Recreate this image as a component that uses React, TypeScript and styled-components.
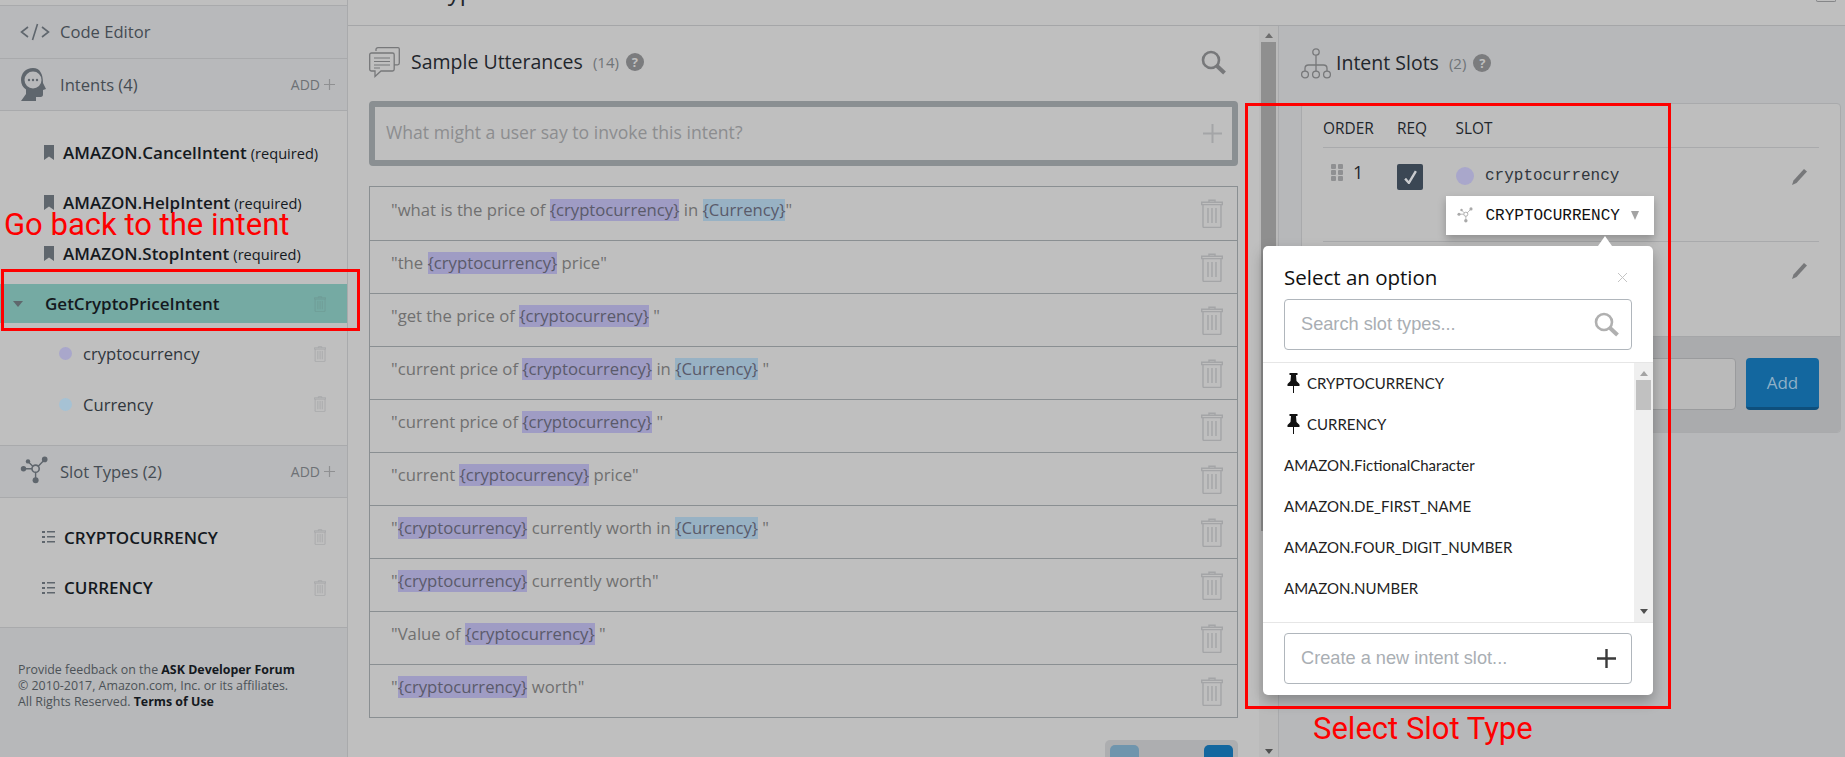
import { createGlobalStyle, styled } from "styled-components";

const GlobalStyle = createGlobalStyle`
  html, body {
    margin: 0;
    padding: 0;
    height: 100%;
    overflow: hidden;
    background: #bfbfbf;
  }
  * { box-sizing: border-box; }
`;

const SANS = `"Open Sans", "Liberation Sans", sans-serif`;
const MONO = `"Liberation Mono", monospace`;

const Page = styled.div`
  position: relative;
  width: 1845px;
  height: 757px;
  overflow: hidden;
  display: grid;
  grid-template-columns: 348px 1fr;
  font-family: ${SANS};
  color: #1f262c;
`;

/* ---------- sidebar ---------- */
const Sidebar = styled.aside`
  display: flex;
  flex-direction: column;
  height: 757px;
  background: #bfbfbf;
  border-right: 1px solid #a9aaac;
  padding-top: 5px;
`;

const SideHead = styled.div`
  height: 53px;
  flex: none;
  display: flex;
  align-items: center;
  padding: 0 12px 1px 20px;
  background: #b8b9bb;
  border-top: 1px solid #a9aaac;
  border-bottom: ${(p) => (p.$last ? "1px solid #a9aaac" : "none")};
  font-size: 16.6px;
  color: #454c53;
`;

const SideIcon = styled.span`
  width: 40px;
  flex: none;
  display: flex;
  align-items: center;
`;

const AddLink = styled.span`
  margin-left: auto;
  display: flex;
  align-items: center;
  gap: 4px;
  font-size: 14px;
  color: #6d7175;
`;

const SideList = styled.div`
  flex: none;
  height: ${(p) => p.$height}px;
  padding-top: ${(p) => p.$top}px;
`;

const SideItem = styled.div`
  height: ${(p) => p.$height || 50.5}px;
  margin-top: ${(p) => p.$top || 0}px;
  display: flex;
  align-items: center;
  padding-left: ${(p) => p.$indent}px;
  padding-right: 21px;
  gap: ${(p) => p.$gap || 9}px;
  font-size: ${(p) => (p.$bold ? 17 : 16.6)}px;
  font-weight: ${(p) => (p.$bold ? 600 : 400)};
  color: ${(p) => (p.$bold ? "#14191e" : "#30363c")};
  background: ${(p) => (p.$active ? "#75aaa3" : "transparent")};
  & > svg:last-child { margin-left: auto; }
`;

const Required = styled.span`
  font-size: 14.6px;
  font-weight: 500;
  margin-left: 4px;
`;

const Caret = styled.span`
  width: 0;
  height: 0;
  border-left: ${(p) => p.$half || 5}px solid transparent;
  border-right: ${(p) => p.$half || 5}px solid transparent;
  border-top: ${(p) => p.$tall || 6}px solid ${(p) => p.$color || "#5f686d"};
`;

const Dot = styled.span`
  width: ${(p) => p.$size}px;
  height: ${(p) => p.$size}px;
  flex: none;
  border-radius: 50%;
  background: ${(p) => p.$color};
`;

const SideFooter = styled.footer`
  flex: 1;
  background: #b7b8ba;
  border-top: 1px solid #a9aaac;
  padding: 34px 18px 0;
  font-size: 12.4px;
  line-height: 16px;
  color: #4c5257;
  white-space: nowrap;
  b { font-weight: 700; color: #14191e; }
`;

/* ---------- main ---------- */
const Main = styled.main`
  display: flex;
  flex-direction: column;
  height: 757px;
  min-width: 0;
`;

const TitleBar = styled.header`
  height: 26px;
  flex: none;
  overflow: hidden;
  display: flex;
  justify-content: space-between;
  padding: 0 9px 0 29px;
  border-bottom: 1px solid #a5a6a8;
`;

const Title = styled.h1`
  margin: -26px 0 0;
  font-size: 24px;
  line-height: 33px;
  font-weight: 400;
  color: #1f262c;
`;

const TitleButton = styled.span`
  width: 20px;
  height: 2px;
  border: 1px solid #858688;
  border-top: none;
  border-radius: 0 0 2px 2px;
`;

const Columns = styled.div`
  flex: 1;
  min-height: 0;
  display: flex;
`;

const UtterancePanel = styled.section`
  width: 911px;
  flex: none;
  padding: 0 21px 0 21px;
  background: #bfbfbf;
`;

const PanelHead = styled.div`
  height: ${(p) => p.$height}px;
  display: flex;
  align-items: center;
  padding-bottom: ${(p) => p.$pad}px;
`;

const PanelTitle = styled.h2`
  margin: 0 0 0 ${(p) => p.$gap}px;
  padding-bottom: 2px;
  font-size: 19.5px;
  font-weight: 400;
  color: #1f262c;
`;

const Count = styled.span`
  margin-left: 10px;
  font-size: 15px;
  color: #6f7478;
`;

const Help = styled.span`
  width: 18px;
  height: 18px;
  margin-left: 7px;
  border-radius: 50%;
  background: #7b7c7e;
  color: #bfbfbf;
  font-size: 13px;
  font-weight: 700;
  display: flex;
  align-items: center;
  justify-content: center;
`;

const HeadAction = styled.span`
  margin-left: auto;
  margin-right: 12px;
  display: flex;
`;

const UtteranceInput = styled.div`
  height: 65px;
  border: 6px solid #8a8f92;
  border-radius: 4px;
  display: flex;
  align-items: center;
  justify-content: space-between;
  padding: 0 10px 4px 11px;
  font-size: 17.6px;
  color: #8c8d8f;
  svg { margin-top: 4px; }
`;

const UtteranceList = styled.ul`
  list-style: none;
  margin: 20px 0 0;
  padding: 0;
  border: 1px solid #8a8f92;
`;

const Utterance = styled.li`
  height: 53px;
  display: flex;
  align-items: center;
  justify-content: space-between;
  padding: 0 14px 0 21px;
  font-size: 16.7px;
  color: #707070;
  white-space: pre;
  & + & { border-top: 1px solid #8a8f92; }
  & > span { margin-bottom: 9px; }
`;

const Mark = styled.span`
  display: inline-block;
  line-height: 22px;
  height: 22px;
  background: ${(p) => (p.$kind === "Currency" ? "#98b2c4" : "#9f9cc4")};
  color: #5a5a6a;
`;

const Pager = styled.div`
  margin: 22px 0 0 auto;
  width: 133px;
  height: 60px;
  padding: 5px;
  display: flex;
  justify-content: space-between;
  background: #adaeb0;
  border-radius: 5px;
`;

const PagerButton = styled.span`
  width: 29px;
  height: 40px;
  border-radius: 5px;
  background: ${(p) => (p.$disabled ? "#6f95ad" : "#13679f")};
`;

/* ---------- scrollbars ---------- */
const ScrollTrack = styled.div`
  width: ${(p) => p.$width}px;
  flex: none;
  display: flex;
  flex-direction: column;
  align-items: center;
  background: ${(p) => p.$bg};
  padding: ${(p) => p.$top}px 0 ${(p) => p.$bottom}px;
`;

const ArrowUp = styled.span`
  width: 0;
  height: 0;
  border-left: 4px solid transparent;
  border-right: 4px solid transparent;
  border-bottom: 5px solid ${(p) => p.$color};
`;

const ArrowDown = styled(ArrowUp)`
  border-bottom: none;
  border-top: 5px solid #505050;
  margin-top: auto;
`;

const Thumb = styled.span`
  width: ${(p) => p.$width}px;
  height: ${(p) => p.$height}px;
  margin-top: 4px;
  background: ${(p) => p.$color};
`;

/* ---------- slots panel ---------- */
const SlotPanel = styled.section`
  flex: 1;
  padding: 0 4px 0 22px;
  background: #b7b8ba;
  border-left: 1px solid #a9aaac;
`;

const SlotCard = styled.div`
  background: #bebebe;
  border: 1px solid #a9aaac;
  border-radius: 4px;
  overflow: hidden;
`;

const SlotHeadRow = styled.div`
  height: 44px;
  margin: 0 21px;
  padding-top: 6px;
  display: grid;
  grid-template-columns: 74px 58.5px 1fr;
  align-items: center;
  font-size: 15.4px;
  color: #1f262c;
  border-bottom: 1px solid #a9aaac;
`;

const SlotRow = styled.div`
  height: 94px;
  margin: 0 21px;
  padding-top: 16px;
  display: grid;
  grid-template-columns: 74px 58.5px 1fr 30px;
  align-items: start;
  border-bottom: ${(p) => (p.$last ? "none" : "1px solid #a9aaac")};
`;

const OrderCell = styled.div`
  display: flex;
  align-items: center;
  gap: 10px;
  padding-left: 8px;
  font-size: 18px;
  line-height: 17px;
`;

const Grip = styled.span`
  display: grid;
  grid-template-columns: repeat(2, 5px);
  grid-auto-rows: 5px;
  gap: 1px 2px;
  i { background: #8f9092; border-radius: 1px; }
`;

const Check = styled.span`
  width: 26px;
  height: 26px;
  border-radius: 2px;
  background: #3b4754;
  display: flex;
  align-items: center;
  justify-content: center;
`;

const SlotCell = styled.div`
  display: flex;
  flex-direction: column;
  align-items: flex-start;
`;

const SlotName = styled.div`
  display: flex;
  align-items: center;
  gap: 11.5px;
  height: 22px;
  margin-top: 1px;
  font-family: ${MONO};
  font-size: 16px;
  color: #30363c;
`;

const TypeChip = styled.div`
  margin: 9px 0 0 -9.5px;
  width: 208px;
  height: 39px;
  display: flex;
  align-items: center;
  padding-left: 11px;
  background: #fff;
  font-family: ${MONO};
  font-size: 16px;
  color: #111;
  box-shadow: 0 4px 8px rgba(0, 0, 0, 0.25);
  span:last-child { margin-left: 11px; }
`;

const ChipIcon = styled.span`
  width: 28.5px;
  display: flex;
`;

const EditIcon = styled.span`
  padding: 5px 0 0 3px;
  display: flex;
`;

const AddRow = styled.div`
  height: 96px;
  background: #aaabad;
  border-top: 1px solid #a5a6a8;
  padding: 21px 21px 0;
  display: flex;
  gap: 10px;
`;

const AddInput = styled.div`
  flex: 1;
  height: 52px;
  background: #bababa;
  border: 1px solid #9a9b9d;
  border-radius: 4px;
`;

const AddButton = styled.span`
  width: 73px;
  height: 52px;
  background: #13679f;
  border-bottom: 3px solid #0e4f7c;
  border-radius: 4px;
  color: #8fb0c7;
  font-size: 17px;
  display: flex;
  align-items: center;
  justify-content: center;
`;

/* ---------- popover ---------- */
const Popover = styled.div`
  position: absolute;
  left: 1263px;
  top: 246px;
  width: 390px;
  height: 449px;
  background: #fff;
  border-radius: 5px;
  box-shadow: 0 6px 14px rgba(0, 0, 0, 0.28);
  display: flex;
  flex-direction: column;
  &::before {
    content: "";
    position: absolute;
    left: 335px;
    top: -10px;
    border-left: 7px solid transparent;
    border-right: 7px solid transparent;
    border-bottom: 10px solid #fff;
  }
`;

const PopoverHead = styled.div`
  height: 53px;
  flex: none;
  display: flex;
  align-items: center;
  justify-content: space-between;
  padding: 9px 26px 0 21px;
  font-size: 20.5px;
  color: #111;
`;

const PopoverField = styled.div`
  height: 51px;
  margin: 0 21px;
  flex: none;
  border: 1px solid #b0b6bc;
  border-radius: 4px;
  display: flex;
  align-items: center;
  justify-content: space-between;
  padding: 0 ${(p) => p.$right}px 0 16px;
  font-family: "Liberation Sans", sans-serif;
  font-size: 18.2px;
  color: #a9aeb3;
`;

const OptionsArea = styled.div`
  margin-top: 12px;
  height: 261px;
  flex: none;
  display: flex;
  border-top: 1px solid #e6e6e6;
  border-bottom: 1px solid #e6e6e6;
`;

const Options = styled.ul`
  list-style: none;
  flex: 1;
  margin: 0;
  padding: 0 0 0 21px;
`;

const Option = styled.li`
  height: 41px;
  display: flex;
  align-items: center;
  gap: 7px;
  padding: 0 0 2px ${(p) => (p.$pinned ? 3 : 0)}px;
  font-family: Lato, sans-serif;
  font-size: 15px;
  color: #222;
`;

const CreateField = styled(PopoverField)`
  margin-top: 10px;
`;

/* ---------- red annotations ---------- */
const RedBox = styled.div`
  position: absolute;
  left: ${(p) => p.$x}px;
  top: ${(p) => p.$y}px;
  width: ${(p) => p.$w}px;
  height: ${(p) => p.$h}px;
  border: 3px solid #fe0000;
`;

const RedLabel = styled.div`
  position: absolute;
  left: ${(p) => p.$x}px;
  top: ${(p) => p.$y}px;
  font-family: Roboto, sans-serif;
  font-size: 31px;
  line-height: 32px;
  color: #fe0000;
  white-space: nowrap;
`;

/* ---------- drawings ---------- */
const Trash = ({ h = 29, color = "#a4a5a7" }: { h?: number; color?: string }) => (
  <svg width={(h * 22) / 29} height={h} viewBox="0 0 22 29" fill="none" stroke={color} strokeWidth="1.4">
    <path d="M8 3V1.2h6V3M0.7 3.2h20.6v2.4H0.7zM2 5.6v21.6c0 .8.6 1.3 1.3 1.3h15.4c.7 0 1.3-.5 1.3-1.3V5.6M7 9v15M11 9v15M15 9v15" />
  </svg>
);

const Bookmark = () => (
  <svg width="10" height="15" viewBox="0 0 10 15" fill="#5f666d">
    <path d="M0 0h10v15L5 11.5 0 15z" />
  </svg>
);

const ListIcon = () => (
  <svg width="13" height="12" viewBox="0 0 13 12" fill="#5f666d">
    <path d="M0 0h3v2H0zM5 0h8v1.5H5zM0 5h3v2H0zM5 5h8v1.5H5zM0 10h3v2H0zM5 10h8v1.5H5z" />
  </svg>
);

const CodeIcon = () => (
  <svg width="30" height="18" viewBox="0 0 30 18" fill="none" stroke="#5f666d" strokeWidth="1.6">
    <path d="M8 4 1.5 9 8 14M22 4l6.5 5L22 14M17.5 1l-5 16" />
  </svg>
);

const HeadIcon = () => (
  <svg width="27" height="33" viewBox="0 0 27 33">
    <path
      fill="#5f666d"
      d="M13 0C5.5 0 1 5.5 1 12c0 4.500 2 7.500 5 9.500V26l-5 7h15v-4h4.500c1.800 0 2.500-1 2.500-2.500V22l3-1-3-6C23 6 20 0 13 0z"
    />
    <circle cx="13" cy="12" r="8.500" fill="#b8b9bb" />
    <circle cx="9" cy="12" r="1.200" fill="#5f666d" />
    <circle cx="13" cy="12" r="1.200" fill="#5f666d" />
    <circle cx="17" cy="12" r="1.200" fill="#5f666d" />
  </svg>
);

const NetworkIcon = ({ size = 30, color = "#5f666d" }: { size?: number; color?: string }) => (
  <svg width={size} height={size} viewBox="0 0 30 30" fill={color} stroke={color}>
    <path strokeWidth="1.4" d="M3.500 12.700H12M8 5.500l5 5M24.700 3.500 18 10.500M15.600 16v8" />
    <circle cx="15.600" cy="12.700" r="3.600" fill="none" strokeWidth="1.6" />
    <circle cx="3.500" cy="12.700" r="2.700" stroke="none" />
    <circle cx="8" cy="5.400" r="2.200" stroke="none" />
    <circle cx="24.700" cy="3.400" r="2.800" stroke="none" />
    <circle cx="15.600" cy="24.300" r="3" stroke="none" />
  </svg>
);

const BubblesIcon = () => (
  <svg width="31" height="31" viewBox="0 0 31 31" fill="none" stroke="#77787a" strokeWidth="1.300">
    <path d="M7 4V2.500C7 1.300 7.800.7 9 .7h20c.8 0 1.300.6 1.300 1.300v14c0 1-.5 1.800-1.600 1.800H25" />
    <path d="M2.500 6h21c1 0 1.700.7 1.700 1.700v14.600c0 1-.7 1.700-1.700 1.700H12l-6 5.500V24H2.500C1.500 24 .7 23.300.7 22.300V7.700C.7 6.700 1.500 6 2.500 6z" />
    <path d="M5 11h16M5 14.500h16M5 18h16M5 21h6" strokeWidth="1.100" />
  </svg>
);

const TreeIcon = () => (
  <svg width="30" height="31" viewBox="0 0 30 31" fill="none" stroke="#77787a" strokeWidth="1.300">
    <circle cx="15" cy="4" r="3.200" />
    <circle cx="4" cy="26.500" r="3.400" />
    <circle cx="15" cy="26.500" r="3.400" />
    <circle cx="26" cy="26.500" r="3.400" />
    <path d="M15 7.200v16M4 23.100v-2.600c0-2 1.500-3.500 3.500-3.500h15c2 0 3.500 1.500 3.500 3.500v2.600" />
  </svg>
);

const SearchIcon = ({ size = 25, color = "#77787a" }: { size?: number; color?: string }) => (
  <svg width={size} height={size} viewBox="0 0 25 25" fill="none" stroke={color}>
    <circle cx="10" cy="10" r="8" strokeWidth="2.600" />
    <path d="m16 16 7.500 7" strokeWidth="4" />
  </svg>
);

const PlusIcon = ({ size = 19, color = "#a4a5a7", w = 2 }: { size?: number; color?: string; w?: number }) => (
  <svg width={size} height={size} viewBox="0 0 19 19" stroke={color} strokeWidth={w}>
    <path d="M9.500 0v19M0 9.500h19" />
  </svg>
);

const PencilIcon = () => (
  <svg width="15" height="16" viewBox="0 0 15 16" fill="#77787a">
    <path d="M12 0l3 2.500L4.500 14 0 16l1.500-4.500z" />
  </svg>
);

const PinIcon = () => (
  <svg width="13" height="20" viewBox="0 0 12 20" fill="#111">
    <path d="M2 0h8v2H8.500l.5 6 3 3v2H6.500v7h-1v-7H0v-2l3-3 .5-6H2z" />
  </svg>
);

const CloseIcon = () => (
  <svg width="9" height="9" viewBox="0 0 9 9" stroke="#c4c4c4" strokeWidth="1">
    <path d="M0 0l9 9M9 0 0 9" />
  </svg>
);

const CheckMark = () => (
  <svg width="13" height="14" viewBox="0 0 12 13" fill="none" stroke="#c9cbce" strokeWidth="2.200">
    <path d="M1 8l3.500 4L11 1" />
  </svg>
);

/* ---------- data ---------- */
const utterances = [
  "what is the price of {cryptocurrency} in {Currency}",
  "the {cryptocurrency} price",
  "get the price of {cryptocurrency} ",
  "current price of {cryptocurrency} in {Currency} ",
  "current price of {cryptocurrency} ",
  "current {cryptocurrency} price",
  "{cryptocurrency} currently worth in {Currency} ",
  "{cryptocurrency} currently worth",
  "Value of {cryptocurrency} ",
  "{cryptocurrency} worth",
];

const builtinIntents = ["AMAZON.CancelIntent", "AMAZON.HelpIntent", "AMAZON.StopIntent"];

const slotTypeOptions = [
  "AMAZON.FictionalCharacter",
  "AMAZON.DE_FIRST_NAME",
  "AMAZON.FOUR_DIGIT_NUMBER",
  "AMAZON.NUMBER",
];

const renderUtterance = (text: string) =>
  text.split(/(\{[^}]+\})/).map((part, i) =>
    part.startsWith("{") ? (
      <Mark key={i} $kind={part.slice(1, -1)}>
        {part}
      </Mark>
    ) : (
      part
    ),
  );

export default function App() {
  return (
    <>
      <GlobalStyle />
      <Page>
        <Sidebar>
          <SideHead>
            <SideIcon>
              <CodeIcon />
            </SideIcon>
            Code Editor
          </SideHead>
          <SideHead $last>
            <SideIcon>
              <HeadIcon />
            </SideIcon>
            Intents (4)
            <AddLink>
              ADD <PlusIcon size={11} color="#8f9092" />
            </AddLink>
          </SideHead>
          <SideList $height={334} $top={16}>
            {builtinIntents.map((name) => (
              <SideItem key={name} $indent={44} $bold>
                <Bookmark />
                <span>
                  {name}
                  <Required>(required)</Required>
                </span>
              </SideItem>
            ))}
            <SideItem $indent={13} $gap={22} $height={39} $top={5.5} $active $bold>
              <Caret />
              GetCryptoPriceIntent
              <Trash h={16} color="#6f9a94" />
            </SideItem>
            <SideItem $indent={59} $gap={11} $height={61}>
              <Dot $size={13} $color="#a9a7cb" />
              cryptocurrency
              <Trash h={16} />
            </SideItem>
            <SideItem $indent={59} $gap={11} $height={40}>
              <Dot $size={13} $color="#a6c2d4" />
              Currency
              <Trash h={16} />
            </SideItem>
          </SideList>
          <SideHead $last>
            <SideIcon>
              <NetworkIcon />
            </SideIcon>
            Slot Types (2)
            <AddLink>
              ADD <PlusIcon size={11} color="#8f9092" />
            </AddLink>
          </SideHead>
          <SideList $height={129} $top={14}>
            <SideItem $indent={42} $gap={9} $bold>
              <ListIcon />
              CRYPTOCURRENCY
              <Trash h={16} />
            </SideItem>
            <SideItem $indent={42} $gap={9} $bold>
              <ListIcon />
              CURRENCY
              <Trash h={16} />
            </SideItem>
          </SideList>
          <SideFooter>
            Provide feedback on the <b>ASK Developer Forum</b>
            <br />© 2010-2017, Amazon.com, Inc. or its affiliates.
            <br />
            All Rights Reserved. <b>Terms of Use</b>
          </SideFooter>
        </Sidebar>

        <Main>
          <TitleBar>
            <Title>Get Crypto Price Intent</Title>
            <TitleButton />
          </TitleBar>
          <Columns>
            <UtterancePanel>
              <PanelHead $height={75} $pad={3}>
                <BubblesIcon />
                <PanelTitle $gap={11}>Sample Utterances</PanelTitle>
                <Count>(14)</Count>
                <Help>?</Help>
                <HeadAction>
                  <SearchIcon />
                </HeadAction>
              </PanelHead>
              <UtteranceInput>
                What might a user say to invoke this intent?
                <PlusIcon />
              </UtteranceInput>
              <UtteranceList>
                {utterances.map((text) => (
                  <Utterance key={text}>
                    <span>"{renderUtterance(text)}"</span>
                    <Trash />
                  </Utterance>
                ))}
              </UtteranceList>
              <Pager>
                <PagerButton $disabled />
                <PagerButton />
              </Pager>
            </UtterancePanel>

            <ScrollTrack $width={19} $bg="#bababa" $top={7} $bottom={3}>
              <ArrowUp $color="#6e6e6e" />
              <Thumb $width={15} $height={489} $color="#8f8f8f" />
              <ArrowDown $color="#505050" />
            </ScrollTrack>

            <SlotPanel>
              <PanelHead $height={77} $pad={3}>
                <TreeIcon />
                <PanelTitle $gap={5}>Intent Slots</PanelTitle>
                <Count>(2)</Count>
                <Help>?</Help>
              </PanelHead>
              <SlotCard>
                <SlotHeadRow>
                  <span>ORDER</span>
                  <span>REQ</span>
                  <span>SLOT</span>
                </SlotHeadRow>
                <SlotRow>
                  <OrderCell>
                    <Grip>
                      <i />
                      <i />
                      <i />
                      <i />
                      <i />
                      <i />
                    </Grip>
                    1
                  </OrderCell>
                  <Check>
                    <CheckMark />
                  </Check>
                  <SlotCell>
                    <SlotName>
                      <Dot $size={18} $color="#a9a7cb" />
                      cryptocurrency
                    </SlotName>
                    <TypeChip>
                      <ChipIcon>
                        <NetworkIcon size={17} color="#a9a9a9" />
                      </ChipIcon>
                      CRYPTOCURRENCY
                      <Caret $color="#a3a3a3" $half={4.5} $tall={9} />
                    </TypeChip>
                  </SlotCell>
                  <EditIcon>
                    <PencilIcon />
                  </EditIcon>
                </SlotRow>
                <SlotRow $last>
                  <OrderCell>
                    <Grip>
                      <i />
                      <i />
                      <i />
                      <i />
                      <i />
                      <i />
                    </Grip>
                    2
                  </OrderCell>
                  <Check>
                    <CheckMark />
                  </Check>
                  <SlotCell>
                    <SlotName>
                      <Dot $size={18} $color="#a6c2d4" />
                      Currency
                    </SlotName>
                  </SlotCell>
                  <EditIcon>
                    <PencilIcon />
                  </EditIcon>
                </SlotRow>
                <AddRow>
                  <AddInput />
                  <AddButton>Add</AddButton>
                </AddRow>
              </SlotCard>
            </SlotPanel>
          </Columns>
        </Main>

        <Popover>
          <PopoverHead>
            Select an option
            <CloseIcon />
          </PopoverHead>
          <PopoverField $right={12}>
            Search slot types...
            <SearchIcon size={25} color="#b0b0b0" />
          </PopoverField>
          <OptionsArea>
            <Options>
              <Option $pinned>
                <PinIcon />
                CRYPTOCURRENCY
              </Option>
              <Option $pinned>
                <PinIcon />
                CURRENCY
              </Option>
              {slotTypeOptions.map((name) => (
                <Option key={name}>{name}</Option>
              ))}
            </Options>
            <ScrollTrack $width={19} $bg="#efefef" $top={8} $bottom={8}>
              <ArrowUp $color="#a3a3a3" />
              <Thumb $width={15} $height={30} $color="#c1c1c1" />
              <ArrowDown $color="#505050" />
            </ScrollTrack>
          </OptionsArea>
          <CreateField $right={15}>
            Create a new intent slot...
            <PlusIcon size={19} color="#3a3a3a" w={2.4} />
          </CreateField>
        </Popover>

        <RedBox $x={1} $y={269} $w={359} $h={62} />
        <RedBox $x={1245} $y={103} $w={426} $h={606} />
        <RedLabel $x={4} $y={209}>
          Go back to the intent
        </RedLabel>
        <RedLabel $x={1313} $y={713}>
          Select Slot Type
        </RedLabel>
      </Page>
    </>
  );
}
